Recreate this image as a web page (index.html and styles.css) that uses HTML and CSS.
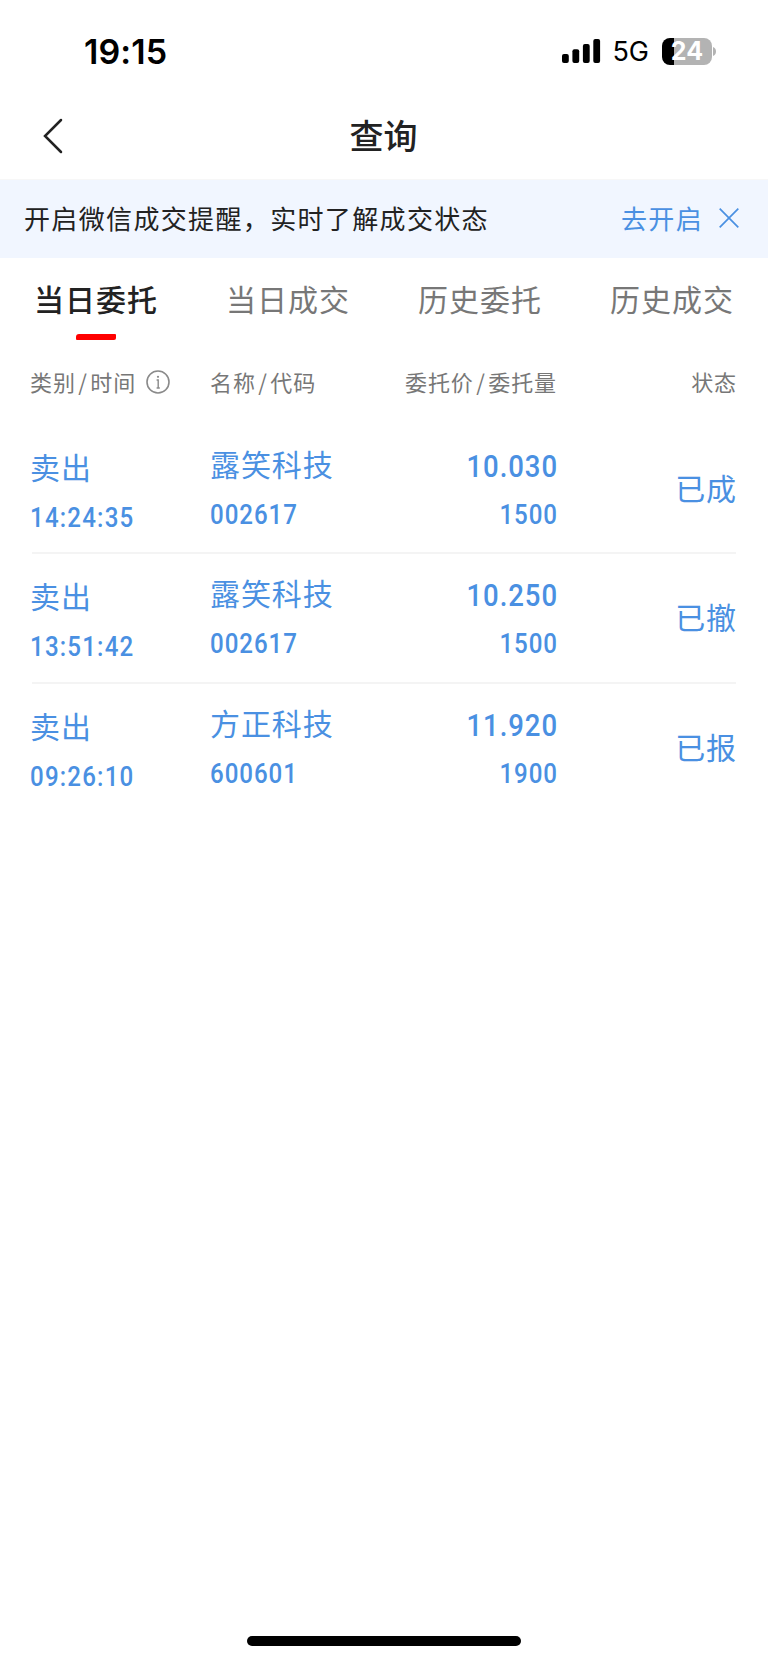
FILE: index.html
```html
<!DOCTYPE html>
<html lang="zh-CN">
<head>
    <meta charset="UTF-8">
    <meta name="viewport" content="width=device-width, initial-scale=1.0">
    <title>查询</title>
    <link rel="stylesheet" href="styles.css">
</head>
<body>
    <div class="status-bar">
        <span class="clock">19:15</span>
        <div class="status-icons">
            <svg class="signal" width="39" height="25" viewBox="0 0 39 25">
                <rect x="0" y="15" width="6.8" height="9" rx="2"/>
                <rect x="10.4" y="10.3" width="6.8" height="13.7" rx="2"/>
                <rect x="20.9" y="5" width="6.8" height="19" rx="2"/>
                <rect x="31.3" y="0" width="6.8" height="24" rx="2"/>
            </svg>
            <span class="network">5G</span>
            <div class="battery"><span>24</span></div>
            <svg class="battery-tip" width="4" height="9" viewBox="0 0 4 9"><path d="M0 0C4 1.5 4 7.5 0 9z" fill="#b3b3b3"/></svg>
        </div>
    </div>

    <div class="nav">
        <svg class="back" width="20" height="36" viewBox="0 0 20 36">
            <path d="M18 2L2 18L18 34" fill="none" stroke="#222" stroke-width="2.5" stroke-linecap="round"/>
        </svg>
        <h1>查询</h1>
    </div>

    <div class="notice">
        <span class="notice-text">开启微信成交提醒，实时了解成交状态</span>
        <a class="notice-link">去开启</a>
        <svg class="close" width="20" height="20" viewBox="0 0 20 20">
            <path d="M.7 .7L19.3 19.3M19.3 .7L.7 19.3" fill="none" stroke="#4a90e2" stroke-width="1.7"/>
        </svg>
    </div>

    <div class="tabs">
        <div class="tab active">当日委托</div>
        <div class="tab">当日成交</div>
        <div class="tab">历史委托</div>
        <div class="tab">历史成交</div>
    </div>

    <div class="list">
        <div class="list-head">
            <div class="with-icon">
                <span>类别<i>/</i>时间</span>
                <svg width="24" height="24" viewBox="0 0 24 24">
                    <circle cx="12" cy="12" r="11" fill="none" stroke="#8a8a8a" stroke-width="1.6"/>
                    <path d="M10.6 10H12.2V18M10.6 18H13.8" fill="none" stroke="#8a8a8a" stroke-width="1.4"/>
                    <circle cx="12" cy="6.8" r="1.1" fill="#8a8a8a"/>
                </svg>
            </div>
            <div>名称<i>/</i>代码</div>
            <div class="right">委托价<i>/</i>委托量</div>
            <div class="right">状态</div>
        </div>

        <div class="row">
            <div class="type">
                <div class="cn">卖出</div>
                <div class="num">14:24:35</div>
            </div>
            <div>
                <div class="cn">露笑科技</div>
                <div class="num">002617</div>
            </div>
            <div class="right">
                <div class="num price">10.030</div>
                <div class="num">1500</div>
            </div>
            <div class="cn state">已成</div>
        </div>
        <div class="row">
            <div class="type">
                <div class="cn">卖出</div>
                <div class="num">13:51:42</div>
            </div>
            <div>
                <div class="cn">露笑科技</div>
                <div class="num">002617</div>
            </div>
            <div class="right">
                <div class="num price">10.250</div>
                <div class="num">1500</div>
            </div>
            <div class="cn state">已撤</div>
        </div>
        <div class="row">
            <div class="type">
                <div class="cn">卖出</div>
                <div class="num">09:26:10</div>
            </div>
            <div>
                <div class="cn">方正科技</div>
                <div class="num">600601</div>
            </div>
            <div class="right">
                <div class="num price">11.920</div>
                <div class="num">1900</div>
            </div>
            <div class="cn state">已报</div>
        </div>
    </div>

    <div class="home-bar"></div>
</body>
</html>
```
FILE: styles.css
```css
* {
    box-sizing: border-box;
}
body {
    margin: 0;
    height: 1663px;
    display: flex;
    flex-direction: column;
    background-color: #fff;
    color: #222;
    font-family: "Noto Sans CJK SC", sans-serif;
}
.status-bar {
    height: 96px;
    padding: 6px 51px 0 84px;
    display: flex;
    justify-content: space-between;
    align-items: center;
    color: #000;
    font-family: Inter, sans-serif;
}
.clock {
    font-size: 34px;
    font-weight: 600;
    letter-spacing: 0.1px;
}
.status-icons {
    display: flex;
    align-items: center;
}
.network {
    margin: 2px 13px 0 11px;
    font-size: 27px;
    line-height: 30px;
}
.battery {
    width: 50px;
    height: 27px;
    border-radius: 8px;
    background: linear-gradient(to right, #000 12px, #b3b3b3 12px);
    color: #fff;
    font-size: 25px;
    font-weight: 700;
    line-height: 27px;
    text-align: center;
}
.battery-tip {
    margin-left: 1px;
}
.nav {
    height: 84px;
    padding: 0 43px 3px;
    display: grid;
    grid-template-columns: 60px 1fr 60px;
    align-items: center;
    border-bottom: 1px solid #f7f7f7;
}
.nav h1 {
    margin: 0 1px 3px 0;
    font-size: 34px;
    font-weight: 500;
    line-height: 50px;
    text-align: center;
}
.notice {
    height: 78px;
    padding: 0 29px 2px 24px;
    display: flex;
    align-items: center;
    background-color: #f1f6ff;
    font-size: 26px;
    line-height: 38px;
    letter-spacing: 1.35px;
}
.notice-text {
    flex: 1;
}
.notice-link {
    margin-right: 16px;
    color: #4a90e2;
}
.tabs {
    height: 84px;
    display: grid;
    grid-template-columns: repeat(4, 1fr);
}
.tab {
    display: flex;
    flex-direction: column;
    align-items: center;
    padding-top: 18px;
    color: #777;
    font-size: 30px;
    line-height: 44px;
    letter-spacing: 1px;
}
.active {
    color: #222;
    font-weight: 500;
}
.active::after {
    content: '';
    width: 40px;
    height: 6px;
    margin-top: 14px;
    border-radius: 3px 1px 2px 1px;
    background-color: #f00;
}
.list {
    flex: 1;
    padding: 0 32px;
}
.list-head, .row {
    display: grid;
    grid-template-columns: 178px 180px 167px 179px;
}
.list-head {
    height: 83px;
    padding-top: 23px;
    margin-left: -2px;
    margin-right: -2px;
    grid-template-columns: 180px 160px 187px 180px;
    color: #777;
    font-size: 22px;
    line-height: 32px;
    letter-spacing: 0.9px;
}
.list-head i {
    margin: 0 2.5px;
    font-style: normal;
}
.with-icon {
    display: flex;
    align-items: center;
    align-self: start;
    gap: 10px;
}
.with-icon svg {
    margin-top: 2px;
}
.right {
    text-align: right;
}
.row {
    height: 129.33px;
    padding-top: 16px;
    border-bottom: 2px solid #f4f4f4;
    color: #4a90e2;
}
.row:last-child {
    border-bottom: none;
}
.type {
    margin-left: -2px;
    padding-top: 3px;
}
.cn {
    font-size: 30px;
    line-height: 44px;
    letter-spacing: 0.9px;
}
/* narrow digits */
.num {
    margin-top: 8px;
    font-family: Roboto, sans-serif;
    font-size: 28px;
    font-weight: 500;
    line-height: 44px;
    letter-spacing: 1.1px;
    transform: scaleX(0.86);
    transform-origin: left;
}
.type .num {
    letter-spacing: 1.4px;
}
.right .num {
    margin-top: 5px;
    margin-right: -1px;
    transform-origin: right;
}
.right .price {
    margin-top: 3px;
    font-size: 32px;
}
.state {
    margin-right: -1px;
    padding-top: 24px;
    text-align: right;
}
.home-bar {
    width: 274px;
    height: 10px;
    margin: 0 auto 17px;
    border-radius: 5px;
    background-color: #000;
}
```
